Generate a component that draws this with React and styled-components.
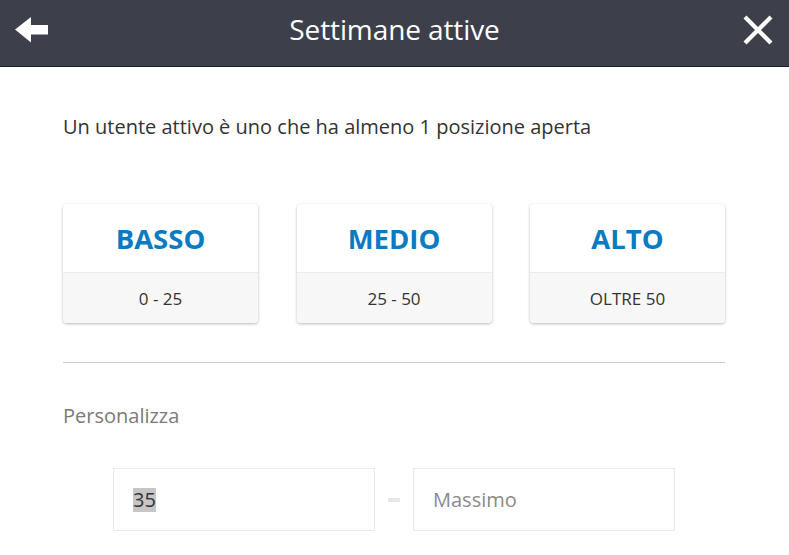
import styled, { createGlobalStyle } from "styled-components";

const GlobalStyle = createGlobalStyle`
  * { box-sizing: border-box; }
  body {
    margin: 0;
    background: #ffffff;
    font-family: "Open Sans", "Liberation Sans", sans-serif;
  }
`;

const Page = styled.div`
  width: 789px;
  height: 555px;
  overflow: hidden;
  background: #ffffff;
`;

const TopBar = styled.header`
  height: 67px;
  background: #3d3f4b;
  border-bottom: 1px solid #1f2026;
  display: flex;
  align-items: center;
  justify-content: space-between;
  padding: 0 14px 0 14px;
`;

const IconButton = styled.button`
  width: 34px;
  height: 34px;
  padding: 0;
  border: none;
  background: transparent;
  display: flex;
  align-items: center;
  justify-content: center;
  cursor: pointer;
  margin-top: -6px;
`;

const Title = styled.h1`
  margin: 0 0 8px 0;
  font-size: 28px;
  font-weight: 400;
  color: #ffffff;
  letter-spacing: -0.1px;
`;

const Content = styled.main`
  padding: 46px 64px 0 63px;
`;

const Intro = styled.p`
  margin: 0;
  font-size: 20px;
  line-height: 28px;
  color: #333333;
`;

const LevelGrid = styled.div`
  margin-top: 63px;
  display: grid;
  grid-template-columns: repeat(3, 195px);
  justify-content: space-between;
`;

const LevelCard = styled.div`
  height: 119px;
  border-radius: 4px;
  overflow: hidden;
  background: #ffffff;
  box-shadow: 0 1px 3px rgba(0, 0, 0, 0.28);
  display: flex;
  flex-direction: column;
  cursor: pointer;
`;

const LevelName = styled.div`
  height: 69px;
  display: flex;
  align-items: center;
  justify-content: center;
  font-size: 27.5px;
  font-weight: 700;
  color: #0a7bc2;
  border-bottom: 1px solid #ebebeb;
`;

const LevelRange = styled.div`
  flex: 1;
  display: flex;
  align-items: center;
  justify-content: center;
  background: #f7f7f7;
  font-size: 17px;
  color: #333333;
`;

const Divider = styled.hr`
  margin: 39px 0 0 0;
  border: none;
  border-top: 1px solid #cfcfcf;
`;

const SectionLabel = styled.div`
  margin-top: 40px;
  font-size: 20px;
  line-height: 26px;
  color: #7a7a7a;
`;

const RangeRow = styled.div`
  margin: 39px auto 0 auto;
  width: 562px;
  display: flex;
  align-items: center;
  justify-content: space-between;
`;

const Field = styled.div`
  width: 262px;
  height: 63px;
  border: 1px solid #e9e9e9;
  background: #ffffff;
  display: flex;
  align-items: center;
  padding: 0 19px;
  font-size: 20px;
  color: ${(p) => (p.$placeholder ? "#8a8a8a" : "#333333")};
`;

const Selected = styled.span`
  background: #c6c6c6;
  line-height: 24px;
`;

const Dash = styled.span`
  width: 12px;
  height: 4px;
  background: #e6e6e6;
`;

const levels = [
  { name: "BASSO", range: "0 - 25" },
  { name: "MEDIO", range: "25 - 50" },
  { name: "ALTO", range: "OLTRE 50" },
];

export default function App() {
  return (
    <Page>
      <GlobalStyle />
      <TopBar>
        <IconButton aria-label="Indietro">
          <svg width="33" height="26" viewBox="0 0 33 26">
            <path d="M0 12.5 L16 0 L16 8 L33 8 L33 17.5 L16 17.5 L16 25.5 Z" fill="#ffffff" />
          </svg>
        </IconButton>
        <Title>Settimane attive</Title>
        <IconButton aria-label="Chiudi">
          <svg width="30" height="30" viewBox="0 0 30 30">
            <path d="M2 2 L28 28 M28 2 L2 28" stroke="#ffffff" strokeWidth="4.2" />
          </svg>
        </IconButton>
      </TopBar>
      <Content>
        <Intro>Un utente attivo è uno che ha almeno 1 posizione aperta</Intro>
        <LevelGrid>
          {levels.map((l) => (
            <LevelCard key={l.name}>
              <LevelName>{l.name}</LevelName>
              <LevelRange>{l.range}</LevelRange>
            </LevelCard>
          ))}
        </LevelGrid>
        <Divider />
        <SectionLabel>Personalizza</SectionLabel>
        <RangeRow>
          <Field>
            <Selected>35</Selected>
          </Field>
          <Dash />
          <Field $placeholder>Massimo</Field>
        </RangeRow>
      </Content>
    </Page>
  );
}
